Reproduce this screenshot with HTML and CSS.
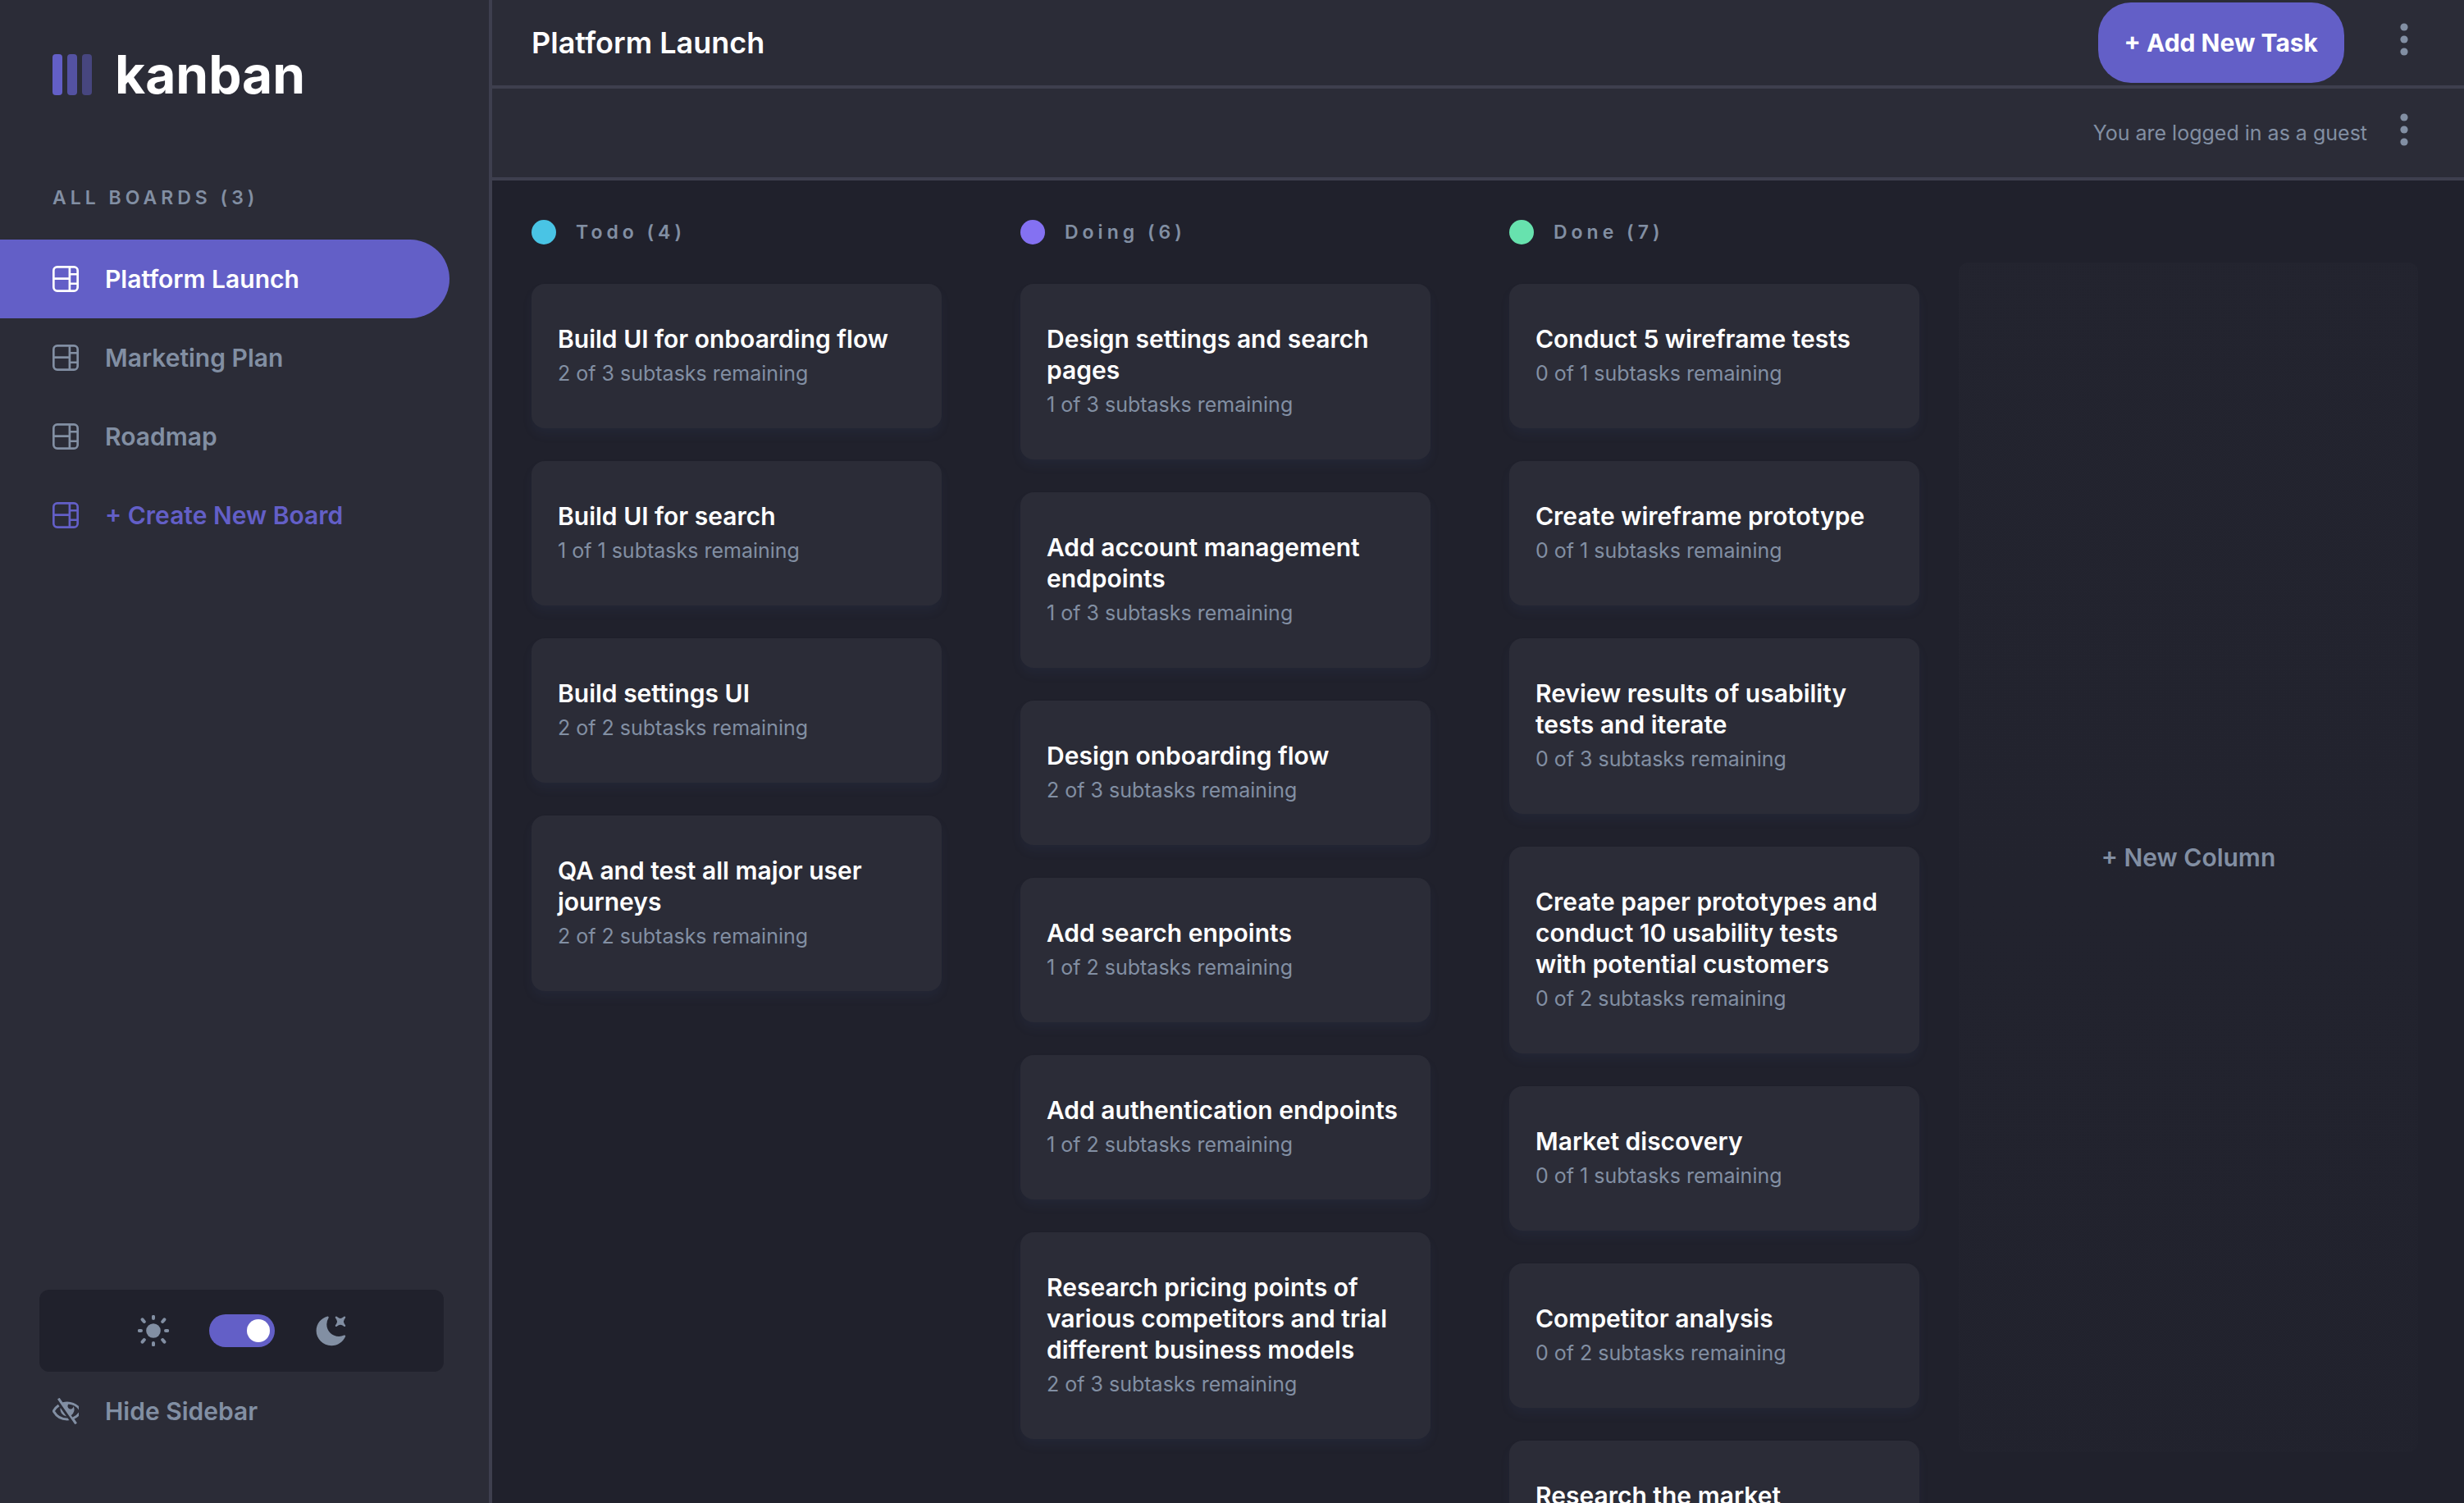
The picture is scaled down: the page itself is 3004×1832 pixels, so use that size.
FILE: index.html
```
<!DOCTYPE html>
<html lang="en">
<head>
<meta charset="utf-8">
<meta name="viewport" content="width=device-width, initial-scale=1">
<title>kanban</title>
<link rel="stylesheet" href="styles.css">
</head>
<body>
<svg class="sprite" aria-hidden="true">
  <symbol id="icon-board" viewBox="0 0 16 16"><path d="M0 2.889A2.889 2.889 0 0 1 2.889 0H13.11A2.889 2.889 0 0 1 16 2.889V13.11A2.888 2.888 0 0 1 13.111 16H2.89A2.889 2.889 0 0 1 0 13.111V2.89Zm1.333 5.555v4.667c0 .859.697 1.556 1.556 1.556h6.889V8.444H1.333Zm8.445-1.333V1.333h-6.89A1.556 1.556 0 0 0 1.334 2.89V7.11h8.445Zm4.889-1.333H11.11v4.444h3.556V5.778Zm0 5.778H11.11v3.11h2a1.556 1.556 0 0 0 1.556-1.555v-1.555Zm0-7.112V2.89a1.555 1.555 0 0 0-1.556-1.556h-2v3.111h3.556Z"/></symbol>
  <symbol id="icon-more" viewBox="0 0 10 40"><circle cx="5" cy="5" r="4.6"/><circle cx="5" cy="20" r="4.6"/><circle cx="5" cy="35" r="4.6"/></symbol>
</svg>

<aside class="sidebar">
  <div class="brand">
    <svg class="brand-mark" viewBox="0 0 48 50" aria-hidden="true">
      <rect width="12" height="50" rx="4"/>
      <rect x="18" width="12" height="50" rx="4" opacity=".75"/>
      <rect x="36" width="12" height="50" rx="4" opacity=".5"/>
    </svg>
    <span class="brand-name">kanban</span>
  </div>

  <nav class="boards">
    <h2 class="boards-title">ALL BOARDS (3)</h2>
    <button class="nav-item is-active" type="button"><svg class="nav-icon"><use href="#icon-board"/></svg>Platform Launch</button>
    <button class="nav-item" type="button"><svg class="nav-icon"><use href="#icon-board"/></svg>Marketing Plan</button>
    <button class="nav-item" type="button"><svg class="nav-icon"><use href="#icon-board"/></svg>Roadmap</button>
    <button class="nav-item is-create" type="button"><svg class="nav-icon"><use href="#icon-board"/></svg>+ Create New Board</button>
  </nav>

  <label class="theme">
    <svg class="theme-icon" viewBox="-19 -19 38 38">
      <circle r="8.8"/>
      <path class="rays" d="M0-17.2V-15M0 15V17.2M-17.2 0H-15M15 0H17.2M-13.4-13.6-11.2-11M13.4-13.6 11.2-11M-13.4 13.6-11.2 11M13.4 13.6 11.2 11"/>
    </svg>
    <input class="theme-switch" type="checkbox" role="switch" checked>
    <svg class="theme-icon" viewBox="0 0 16 16"><path d="M6.474.682c.434-.11.718.406.481.78A6.067 6.067 0 0 0 6.01 4.72c0 3.418 2.827 6.187 6.314 6.187.89.002 1.77-.182 2.584-.54.408-.18.894.165.724.57-1.16 2.775-3.944 4.73-7.194 4.73-4.292 0-7.771-3.41-7.771-7.615 0-3.541 2.466-6.518 5.807-7.37Zm8.433.07c.442-.294.969.232.674.674l-.525.787a1.943 1.943 0 0 0 0 2.157l.525.788c.295.441-.232.968-.674.673l-.787-.525a1.943 1.943 0 0 0-2.157 0l-.786.525c-.442.295-.97-.232-.675-.673l.525-.788a1.943 1.943 0 0 0 0-2.157l-.525-.787c-.295-.442.232-.968.674-.673l.787.525a1.943 1.943 0 0 0 2.157 0l.787-.525Z"/></svg>
  </label>
  <button class="nav-item" type="button"><svg class="nav-icon" viewBox="0 0 16 16"><path d="M8.522 11.223a4.252 4.252 0 0 1-3.654-5.22l3.654 5.22ZM9 12.25A8.685 8.685 0 0 1 1.5 8a8.612 8.612 0 0 1 2.76-2.864l-.86-1.23A10.112 10.112 0 0 0 .208 7.238a1.5 1.5 0 0 0 0 1.524A10.187 10.187 0 0 0 9 13.75c.414 0 .828-.025 1.239-.074l-1-1.43A8.88 8.88 0 0 1 9 12.25Zm8.792-3.488a10.14 10.14 0 0 1-4.486 4.046l1.504 2.148a.375.375 0 0 1-.092.523l-.648.453a.375.375 0 0 1-.523-.092L3.19 1.044A.375.375 0 0 1 3.282.52L3.93.068a.375.375 0 0 1 .523.092l1.735 2.479A10.308 10.308 0 0 1 9 2.25c3.746 0 7.031 2 8.792 4.988a1.5 1.5 0 0 1 0 1.524ZM16.5 8a8.674 8.674 0 0 0-6.755-4.219A1.75 1.75 0 1 0 12.75 5v-.001a4.25 4.25 0 0 1-1.366 5.577l.834 1.192A8.641 8.641 0 0 0 16.5 8Z"/></svg>Hide Sidebar</button>
</aside>

<div class="workspace">
  <header class="bar">
    <h1 class="bar-title">Platform Launch</h1>
    <button class="add-task" type="button">+ Add New Task</button>
    <button class="more" type="button"><svg class="more-icon"><use href="#icon-more"/></svg></button>
  </header>
  <div class="bar bar-account">
    <p class="account">You are logged in as a guest</p>
    <button class="more" type="button"><svg class="more-icon"><use href="#icon-more"/></svg></button>
  </div>

  <main class="board">
    <div class="columns">
      <section class="column">
        <h2 class="column-title"><span class="dot dot-todo"></span>Todo (4)</h2>
        <article class="card"><h3>Build UI for onboarding flow</h3><p>2 of 3 subtasks remaining</p></article>
        <article class="card"><h3>Build UI for search</h3><p>1 of 1 subtasks remaining</p></article>
        <article class="card"><h3>Build settings UI</h3><p>2 of 2 subtasks remaining</p></article>
        <article class="card"><h3>QA and test all major user journeys</h3><p>2 of 2 subtasks remaining</p></article>
      </section>
      <section class="column">
        <h2 class="column-title"><span class="dot dot-doing"></span>Doing (6)</h2>
        <article class="card"><h3>Design settings and search pages</h3><p>1 of 3 subtasks remaining</p></article>
        <article class="card"><h3>Add account management endpoints</h3><p>1 of 3 subtasks remaining</p></article>
        <article class="card"><h3>Design onboarding flow</h3><p>2 of 3 subtasks remaining</p></article>
        <article class="card"><h3>Add search enpoints</h3><p>1 of 2 subtasks remaining</p></article>
        <article class="card"><h3>Add authentication endpoints</h3><p>1 of 2 subtasks remaining</p></article>
        <article class="card"><h3>Research pricing points of various competitors and trial different business models</h3><p>2 of 3 subtasks remaining</p></article>
      </section>
      <section class="column">
        <h2 class="column-title"><span class="dot dot-done"></span>Done (7)</h2>
        <article class="card"><h3>Conduct 5 wireframe tests</h3><p>0 of 1 subtasks remaining</p></article>
        <article class="card"><h3>Create wireframe prototype</h3><p>0 of 1 subtasks remaining</p></article>
        <article class="card"><h3>Review results of usability tests and iterate</h3><p>0 of 3 subtasks remaining</p></article>
        <article class="card"><h3>Create paper prototypes and conduct 10 usability tests with potential customers</h3><p>0 of 2 subtasks remaining</p></article>
        <article class="card"><h3>Market discovery</h3><p>0 of 1 subtasks remaining</p></article>
        <article class="card"><h3>Competitor analysis</h3><p>0 of 2 subtasks remaining</p></article>
        <article class="card"><h3>Research the market</h3></article>
      </section>
    </div>
    <button class="new-column" type="button">+ New Column</button>
  </main>
</div>
</body>
</html>
```
FILE: styles.css
```
:root {
  --purple: #635fc7;
  --muted: #828fa3;
  --surface: #2b2c37;
  --page: #20212c;
  --line: #3e3f4e;
}

* {
  box-sizing: border-box;
  margin: 0;
}

body {
  display: flex;
  height: 100vh;
  overflow: hidden;
  background: var(--page);
  color: var(--muted);
  font-family: Inter, "Liberation Sans", sans-serif;
}

svg {
  display: block;
  flex: none;
  fill: currentColor;
}

button {
  border: 0;
  padding: 0;
  background: none;
  color: inherit;
  font: inherit;
  cursor: pointer;
}

.sprite {
  display: none;
}

/* Sidebar */

.sidebar {
  display: flex;
  flex: none;
  flex-direction: column;
  width: 600px;
  padding: 52px 48px 64px 0;
  border-right: 4px solid var(--line);
  background: var(--surface);
}

.brand {
  display: flex;
  align-items: center;
  gap: 28px;
  height: 78px;
  padding-left: 64px;
}

.brand-mark {
  width: 48px;
  height: 50px;
  fill: var(--purple);
}

.brand-name {
  color: #fff;
  font-size: 64px;
  font-weight: 700;
  line-height: 78px;
}

.boards {
  display: flex;
  flex: 1;
  flex-direction: column;
  padding-top: 96px;
}

.boards-title,
.column-title {
  font-size: 23px;
  font-weight: 600;
  letter-spacing: 5px;
  line-height: 30px;
}

.boards-title {
  padding: 0 0 36px 64px;
}

.nav-item {
  display: flex;
  align-items: center;
  gap: 32px;
  height: 96px;
  padding-left: 64px;
  border-radius: 0 48px 48px 0;
  font-size: 30px;
  font-weight: 600;
}

.nav-item.is-active {
  background: var(--purple);
  color: #fff;
}

.nav-item.is-create {
  color: var(--purple);
}

.nav-icon {
  width: 32px;
  height: 32px;
}

.theme {
  display: flex;
  align-items: center;
  justify-content: center;
  gap: 49px;
  height: 100px;
  margin: 0 7px 0 48px;
  border-radius: 12px;
  background: var(--page);
}

.theme-icon {
  width: 38px;
  height: 38px;
}

.rays {
  stroke: currentColor;
  stroke-linecap: round;
  stroke-width: 4;
}

.theme-switch {
  display: flex;
  align-items: center;
  justify-content: flex-end;
  width: 80px;
  height: 40px;
  padding: 6px;
  border-radius: 20px;
  background: var(--purple);
  appearance: none;
}

.theme-switch::before {
  width: 28px;
  height: 28px;
  border-radius: 50%;
  background: #fff;
  content: "";
}

.theme-switch:not(:checked) {
  justify-content: flex-start;
}

/* Top bars */

.workspace {
  display: flex;
  flex: 1;
  flex-direction: column;
  min-width: 0;
}

.bar {
  display: flex;
  flex: none;
  align-items: center;
  gap: 68px;
  height: 108px;
  padding: 0 68px 0 48px;
  border-bottom: 4px solid var(--line);
  background: var(--surface);
}

.bar-account {
  gap: 40px;
  height: 112px;
  justify-content: flex-end;
}

.bar-title {
  flex: 1;
  color: #fff;
  font-size: 36px;
  font-weight: 600;
}

.add-task {
  height: 98px;
  padding: 0 32px;
  border-radius: 40px;
  background: var(--purple);
  color: #fff;
  font-size: 30px;
  font-weight: 700;
}

.account {
  font-size: 25px;
}

.more {
  padding-bottom: 8px;
}

.more-icon {
  width: 10px;
  height: 40px;
}

/* Board */

.board {
  display: flex;
  flex: 1;
  gap: 48px;
  min-height: 0;
  padding: 48px 56px 0 48px;
  overflow: auto;
  scrollbar-width: none;
}

.columns {
  display: flex;
  gap: 96px;
}

.column {
  display: flex;
  flex-direction: column;
  gap: 40px;
  width: 500px;
}

.column-title {
  display: flex;
  align-items: center;
  gap: 24px;
  padding-bottom: 8px;
}

.dot {
  width: 30px;
  height: 30px;
  border-radius: 50%;
}

.dot-todo {
  background: #49c4e5;
}

.dot-doing {
  background: #8471f2;
}

.dot-done {
  background: #67e2ae;
}

.card {
  display: flex;
  flex: none;
  flex-direction: column;
  gap: 4px;
  padding: 48px 32px;
  border-radius: 16px;
  background: var(--surface);
  box-shadow: 0 8px 12px rgba(54, 78, 126, 0.1);
}

.card h3 {
  color: #fff;
  font-size: 30px;
  font-weight: 600;
  line-height: 38px;
}

.card p {
  font-size: 25px;
  line-height: 38px;
}

.new-column {
  flex: 1;
  min-width: 400px;
  margin: 52px 0 62px;
  border-radius: 12px;
  background: linear-gradient(rgba(43, 44, 55, 0.25), rgba(43, 44, 55, 0.12));
  font-size: 30px;
  font-weight: 600;
}
```
